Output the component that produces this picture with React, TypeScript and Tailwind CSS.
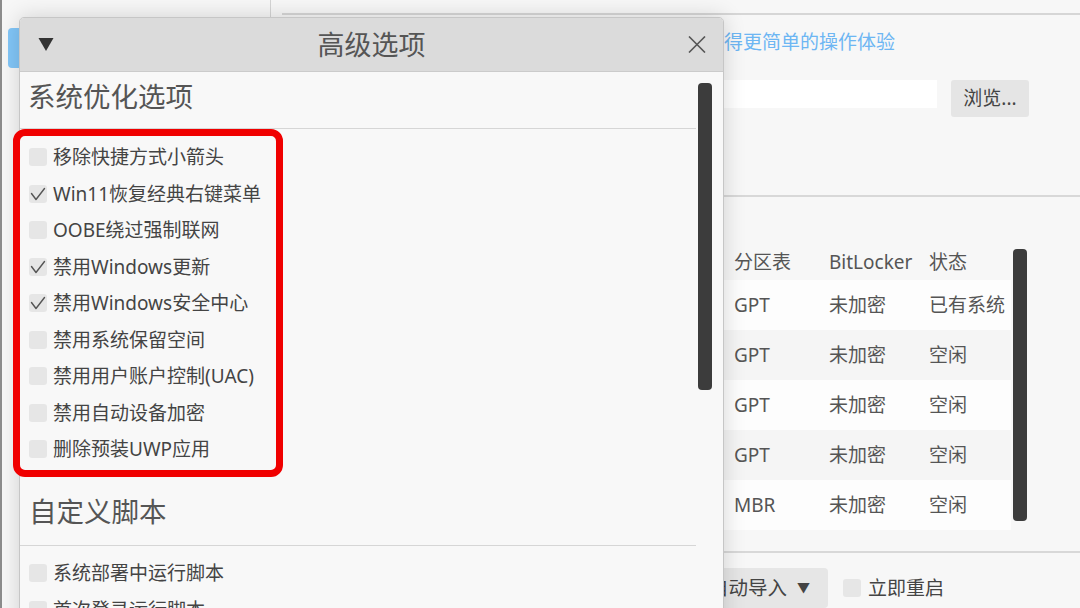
import React from "react";

const opts: [string, boolean][] = [
  ["移除快捷方式小箭头", false],
  ["Win11恢复经典右键菜单", true],
  ["OOBE绕过强制联网", false],
  ["禁用Windows更新", true],
  ["禁用Windows安全中心", true],
  ["禁用系统保留空间", false],
  ["禁用用户账户控制(UAC)", false],
  ["禁用自动设备加密", false],
  ["删除预装UWP应用", false],
];

const scripts: string[] = ["系统部署中运行脚本", "首次登录运行脚本"];

const rows: [string, string, string][] = [
  ["GPT", "未加密", "已有系统"],
  ["GPT", "未加密", "空闲"],
  ["GPT", "未加密", "空闲"],
  ["GPT", "未加密", "空闲"],
  ["MBR", "未加密", "空闲"],
];

function Box({ checked }: { checked: boolean }) {
  return (
    <div className="w-[18px] h-[18px] shrink-0 rounded-[3px] bg-[#e6e6e6] flex items-center justify-center">
      {checked && (
        <svg width="18" height="18" viewBox="0 0 18 18">
          <polyline points="2.5,8.5 7,14.5 15.5,3.5" fill="none" stroke="#555" strokeWidth="1.4" strokeLinecap="round" strokeLinejoin="round" />
        </svg>
      )}
    </div>
  );
}

function Item({ label, checked }: { label: string; checked: boolean }) {
  return (
    <div className="h-[36.5px] pl-[9px] flex items-center gap-[6px]">
      <Box checked={checked} />
      <span className="text-[19px] leading-[26px] text-[#444] whitespace-nowrap">{label}</span>
    </div>
  );
}

export default function App() {
  return (
    <div className="relative w-[1080px] h-[608px] overflow-hidden bg-[#f7f7f7] flex font-['Noto_Sans','Noto_Sans_CJK_SC',sans-serif]">
      {/* sidebar */}
      <aside className="w-[271px] h-full shrink-0 border-l-2 border-l-[#8c8c8c] border-r border-r-[#d4d4d4] pt-[28px] pl-[6px]">
        <div className="h-[40px] w-[250px] rounded-[4px] bg-[#82c6f8]" />
      </aside>

      {/* main */}
      <main className="flex-1 flex flex-col">
        <section className="ml-[11px] mt-[13px] h-[184px] border-t-2 border-t-[#d6d6d6] border-b-2 border-b-[#d8d8d8] flex flex-col">
          <div className="pl-[442px] mt-[14px] text-[19px] leading-[26px] text-[#6db6f3] whitespace-nowrap">得更简单的操作体验</div>
          <div className="pl-[418px] mt-[25px] flex items-start gap-[14px]">
            <div className="w-[237px] h-[28px] bg-white" />
            <div className="w-[78px] h-[37px] rounded-[3px] bg-[#e5e5e5] flex items-center justify-center text-[19px] text-[#444]">浏览...</div>
          </div>
        </section>

        <section className="ml-[11px] h-[356px] border-b-2 border-b-[#d8d8d8] pt-[47px] flex">
          <div className="w-[729px] flex flex-col">
            <div className="h-[36px] pl-[452px] flex items-center text-[19px] text-[#555]">
              <div className="w-[95px]">分区表</div>
              <div className="w-[100px]">BitLocker</div>
              <div>状态</div>
            </div>
            {rows.map((r, i) => (
              <div key={i} className={`h-[50px] pl-[452px] flex items-center text-[19px] text-[#555] ${i % 2 === 0 ? "bg-[#fdfdfd]" : "bg-[#f5f5f5]"}`}>
                <div className="w-[95px]">{r[0]}</div>
                <div className="w-[100px]">{r[1]}</div>
                <div className="whitespace-nowrap">{r[2]}</div>
              </div>
            ))}
          </div>
          <div className="ml-[2px] mt-[5px] w-[14px] h-[272px] rounded-[4px] bg-[#3c3c3c]" />
        </section>

        <section className="ml-[11px] pt-[15px] flex items-center">
          <div className="ml-[407px] w-[139px] h-[40px] rounded-[4px] bg-[#e6e6e6] flex items-center justify-end pr-[18px] text-[19.5px] text-[#444] whitespace-nowrap">
            自动导入<span className="ml-[10px] text-[13px]">▼</span>
          </div>
          <div className="ml-[15px]"><Box checked={false} /></div>
          <span className="ml-[7px] text-[19px] text-[#444]">立即重启</span>
        </section>
      </main>

      {/* dialog */}
      <div className="absolute left-[19px] top-[17px] w-[705px] h-[620px] flex flex-col border border-[#c6c6c6] rounded-t-[5px] bg-[#f8f8f8] shadow-[0_0_22px_rgba(0,0,0,0.16)]">
        <div className="h-[54px] shrink-0 bg-[#dbdbdb] border-b border-b-[#cbcbcb] rounded-t-[4px] grid grid-cols-[1fr_auto_1fr] items-center">
          <div className="pl-[18px] flex items-center">
            <svg width="16" height="15" viewBox="0 0 16 15">
              <polygon points="0.5,1 15.5,1 8,14" fill="#333" />
            </svg>
          </div>
          <div className="text-[27px] leading-[36px] text-[#555]">高级选项</div>
          <div className="pr-[17px] flex justify-end items-center">
            <svg width="18" height="17" viewBox="0 0 18 17">
              <path d="M1 0.5 L17 16.5 M17 0.5 L1 16.5" stroke="#555" strokeWidth="1.6" fill="none" />
            </svg>
          </div>
        </div>
        <div className="flex-1 flex">
          <div className="w-[676px] flex flex-col">
            <div className="pl-[8px] pt-[7px] h-[43px] text-[27.5px] leading-[36px] text-[#555] whitespace-nowrap">系统优化选项</div>
            <div className="mt-[13px] h-px bg-[#d6d6d6]" />
            <div className="pt-[10px]">
              {opts.map(([l, c]) => (
                <Item key={l} label={l} checked={c} />
              ))}
            </div>
            <div className="pl-[9px] mt-[26.5px] h-[36px] text-[27.5px] leading-[36px] text-[#555] whitespace-nowrap">自定义脚本</div>
            <div className="mt-[15px] h-px bg-[#d6d6d6]" />
            <div className="pt-[9px]">
              {scripts.map((l) => (
                <Item key={l} label={l} checked={false} />
              ))}
            </div>
          </div>
          <div className="ml-[2px] mt-[11px] w-[14px] h-[307px] rounded-[4px] bg-[#3c3c3c]" />
        </div>
      </div>

      {/* red annotation */}
      <div className="absolute left-[13px] top-[129px] w-[270px] h-[348px] border-[7px] border-[#f00000] rounded-[12px]" />
    </div>
  );
}
